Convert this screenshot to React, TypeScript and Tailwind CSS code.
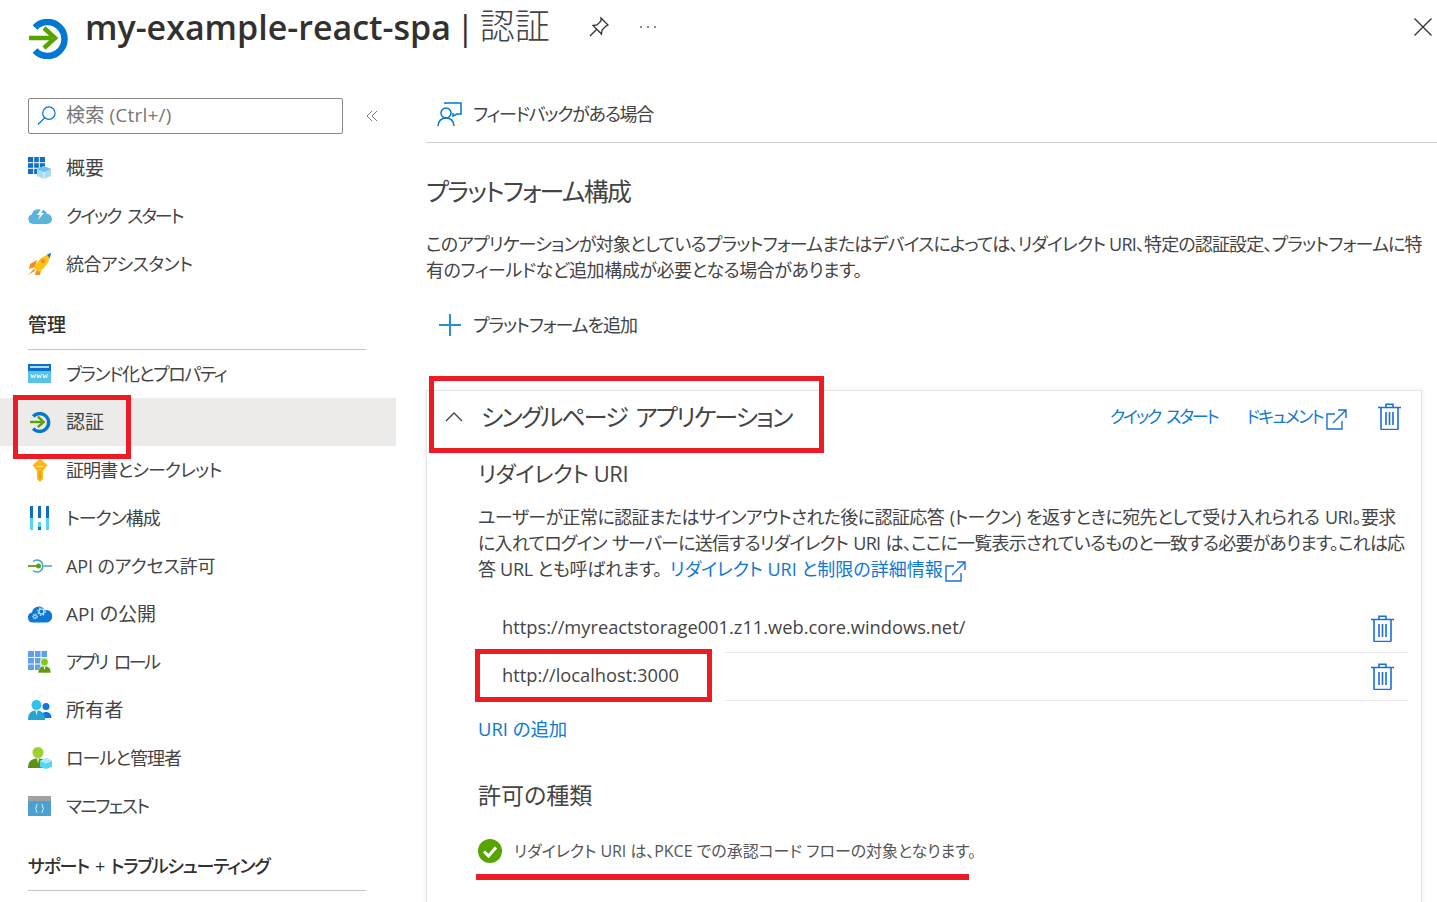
import type { ReactNode } from "react";

const AuthIcon = ({ className }: { className: string }) => (
  <svg viewBox="0 0 40 40" className={className}>
    <path d="M6 8.500A17 17 0 1 1 6 31.500" fill="none" stroke="#0078d4" strokeWidth="6.500" />
    <path d="M0 19h22" stroke="#57a300" strokeWidth="4.500" />
    <path d="M15 9l11 10-11 10" fill="none" stroke="#57a300" strokeWidth="4.500" />
  </svg>
);

const Trash = ({ className }: { className: string }) => (
  <svg viewBox="0 0 23 27" className={className} fill="none" stroke="#1a6fd9" strokeWidth="1.600">
    <path d="M0 4.500h23M3 4.500v21a1 1 0 0 0 1 1h15a1 1 0 0 0 1-1v-21M8 4.500V1.200h7v3.300" />
    <path d="M8 9v13M11.500 9v13M15 9v13" />
  </svg>
);

const ExternalLink = ({ className }: { className: string }) => (
  <svg viewBox="0 0 21 21" className={className} fill="none" stroke="#1a6fd9" strokeWidth="1.400">
    <path d="M9 5H1v15h15v-8M7 14L20 1M12 1h8v8" />
  </svg>
);

const OverviewIcon = () => (
  <svg viewBox="0 0 24 22" className="h-[22px] w-6">
    <path d="M0 0h17v17H0z" fill="#0f6fc6" />
    <path d="M5.700 0v17M11.300 0v17M0 5.700h17M0 11.300h17" stroke="#fff" strokeWidth="1" />
    <path d="M16 9l7 3v7l-7 3-7-3v-7z" fill="#a9dcf3" />
    <path d="M16 9l7 3-7 3-7-3z" fill="#6cc3e8" />
    <path d="M16 15v7" stroke="#fff" strokeWidth="0.800" />
  </svg>
);

const CloudBoltIcon = () => (
  <svg viewBox="0 0 24 16" className="h-4 w-6">
    <path d="M5 16a5 5 0 0 1-1-9.800A6 6 0 0 1 13 2a5 5 0 0 1 6 4 5 5 0 0 1 0 10z" fill="#59b4d9" />
    <path d="M14 0l-5 7h3l-2 5 6-7h-3l3-5z" fill="#fff" />
  </svg>
);

const RocketIcon = () => (
  <svg viewBox="0 0 24 22" className="h-[22px] w-6">
    <path d="M2 11l7-4-2 7-6 2z" fill="#f78d1e" />
    <path d="M13 17l-1 5-5 0 1-4 4-3z" fill="#f78d1e" />
    <path d="M6 15C9 7 15 3 23 0c-1 8-5 14-12 19z" fill="#fcc419" />
    <path d="M19 1.500L23 0c-.3 2-.7 3-1.300 5z" fill="#0078d4" />
    <circle cx="15" cy="8" r="2.200" fill="#f78d1e" />
    <path d="M0 22l6-6 1.500 1.500z" fill="#f78d1e" />
  </svg>
);

const WwwIcon = () => (
  <svg viewBox="0 0 24 20" className="h-5 w-6">
    <path d="M0 0h23v19H0z" fill="#59c2ea" />
    <path d="M0 0h23v7H0z" fill="#0f6fc6" />
    <path d="M2 2h19v2H2z" fill="#a9dcf3" />
    <path d="M3 10l1 4 1.300-3 1.200 3 1-4M9 10l1 4 1.300-3 1.200 3 1-4M15 10l1 4 1.300-3 1.200 3 1-4" fill="none" stroke="#fff" strokeWidth="0.900" />
  </svg>
);

const KeyIcon = () => (
  <svg viewBox="0 0 16 23" className="h-[23px] w-4">
    <path d="M8 0l7.500 6-4.500 6v8l-3 3-3-3v-8L.500 6z" fill="#fcb714" />
    <path d="M4.500 7.500h7" stroke="#ffe27a" strokeWidth="1" />
    <path d="M8 12v9" stroke="#e8960c" strokeWidth="1.200" />
  </svg>
);

const TokenIcon = () => (
  <svg viewBox="0 0 20 24" className="h-6 w-5">
    <path d="M0 0h3v12H0zM8 0h3v12H8zM16 0h3v12h-3z" fill="#0f6fc6" />
    <path d="M0 12h3v12H0zM16 12h3v12h-3z" fill="#50d8f5" />
    <path d="M8 16h3v5H8z" fill="#50d8f5" />
    <path d="M8 21h3v3H8z" fill="#0f6fc6" />
  </svg>
);

const ApiPermIcon = () => (
  <svg viewBox="0 0 24 14" className="h-3.5 w-6">
    <path d="M5 2.500A6 6 0 1 1 5 11.500" fill="none" stroke="#3ba3d0" strokeWidth="1.500" />
    <path d="M16 7h8" stroke="#3ba3d0" strokeWidth="1.500" />
    <path d="M0 7h10" stroke="#57a300" strokeWidth="1.800" />
    <circle cx="10.500" cy="7" r="2.500" fill="#57a300" />
  </svg>
);

const CloudGearIcon = () => (
  <svg viewBox="0 0 24 18" className="h-[18px] w-6">
    <path d="M5 17.500a5 5 0 0 1-1-9.900A7 7 0 0 1 17 5a6.300 6.300 0 0 1 2 12.500z" fill="#0f78d4" />
    <circle cx="13.500" cy="6.500" r="2.500" fill="none" stroke="#d5ecf9" strokeWidth="1.200" />
    <circle cx="13.500" cy="6.500" r="3.800" fill="none" stroke="#d5ecf9" strokeWidth="1.200" strokeDasharray="1.500 1.500" />
    <circle cx="7" cy="11.500" r="1.500" fill="none" stroke="#d5ecf9" strokeWidth="1" />
    <circle cx="7" cy="11.500" r="2.500" fill="none" stroke="#d5ecf9" strokeWidth="1" strokeDasharray="1.200 1.200" />
  </svg>
);

const AppRoleIcon = () => (
  <svg viewBox="0 0 24 22" className="h-[22px] w-6">
    <path d="M0 0h19v19H0z" fill="#5ea0ef" />
    <path d="M6.500 0v19M13 0v19M0 6.500h19M0 13h19" stroke="#fff" strokeWidth="1" />
    <circle cx="16.500" cy="11" r="4" fill="#86c71a" stroke="#fff" strokeWidth="0.800" />
    <path d="M10 22c0-5 2.500-7 6.500-7s6.500 2 6.500 7z" fill="#5e9d10" stroke="#fff" strokeWidth="0.600" />
    <path d="M15.500 15.500h2l-1 3.500z" fill="#fff" />
  </svg>
);

const OwnersIcon = () => (
  <svg viewBox="0 0 24 20" className="h-5 w-6">
    <circle cx="18" cy="6.500" r="3.500" fill="#0f78d4" />
    <path d="M13 18c0-4 2-6 5-6s5.500 2 5.500 6z" fill="#0f78d4" />
    <circle cx="8.500" cy="5" r="5" fill="#2fc3ed" />
    <path d="M0 20c0-7 3-9.500 8.500-9.500s8.500 2.500 8.500 9.500z" fill="#23a6d0" />
    <path d="M7.500 10.500h2l-1 5z" fill="#fff" />
  </svg>
);

const RoleAdminIcon = () => (
  <svg viewBox="0 0 24 22" className="h-[22px] w-6">
    <circle cx="10" cy="5.500" r="5.500" fill="#9bd32a" />
    <path d="M0 21c0-7 4-9.500 10-9.500S20 14 20 21z" fill="#5e8f12" />
    <path d="M9 11.500h2l-1 5z" fill="#fff" />
    <path d="M18 11l6 3v6l-6 2-6-2v-6z" fill="#50d8f5" />
    <path d="M18 11l6 3-6 2.500-6-2.500z" fill="#a9ecfb" />
  </svg>
);

const ManifestIcon = () => (
  <svg viewBox="0 0 24 20" className="h-5 w-6">
    <path d="M0 0h23v5H0z" fill="#a0a1a2" />
    <path d="M0 5h23v15H0z" fill="#4b9fd1" />
    <path d="M9.500 8.500q-1.500 0-1.200 2 .2 1.500-1 2 1.200.5 1 2-.3 2 1.200 2M13.500 8.500q1.500 0 1.200 2-.2 1.500 1 2-1.200.5-1 2 .3 2-1.200 2" fill="none" stroke="#fff" strokeWidth="0.900" />
  </svg>
);

const Item = ({ icon, label, text, active }: { icon: ReactNode; label: string; text: string; active?: boolean }) => (
  <div className={`flex h-12 items-center pl-7 text-[#444] ${active ? "bg-[#edebe9]" : ""}`}>
    <span className="flex w-6 shrink-0 items-center justify-center">{icon}</span>
    <span className={`ml-3.5 ${text}`}>{label}</span>
  </div>
);

const SectionHead = ({ label, text }: { label: string; text: string }) => (
  <div className={`mx-7 w-[338px] border-b border-[#c8c6c4] pb-[10px] leading-[28px] font-medium text-[#323130] ${text}`}>
    {label}
  </div>
);

const UriRow = ({ uri }: { uri: string }) => (
  <>
    <div className="flex h-[47px] items-center justify-between pb-[3px] pl-6 pr-[14px] text-[18.300px] text-[#444]">
      <span>{uri}</span>
      <Trash className="mt-[2px] h-[27px] w-[23px]" />
    </div>
    <div className="ml-[246px] h-px bg-[#edebe9]" />
  </>
);

export default function App() {
  return (
    <div className="relative h-[902px] w-[1437px] overflow-hidden bg-white font-['Open_Sans','Noto_Sans_CJK_JP',sans-serif] [font-feature-settings:'palt'] text-[#323130]">
      {/* Header */}
      <header className="flex h-[98px] items-start pl-[29px]">
        <AuthIcon className="mt-[19px] h-10 w-10 shrink-0" />
        <h1 className="ml-[16px] mt-[4px] text-[34px] leading-[46px] font-semibold whitespace-nowrap">my-example-react-spa</h1>
        <span className="ml-[5px] mt-[4px] text-[34px] leading-[46px] text-[#323130]">|</span>
        <span className="ml-[5px] mt-[3px] text-[35px] leading-[46px] font-light text-[#444]">認証</span>
        <svg viewBox="0 0 22 22" className="ml-[38px] mt-[16px] h-[22px] w-[22px]" fill="none" stroke="#323130" strokeWidth="1.300">
          <path d="M13 2l7 7-2 1-4 4-.5 4L5 9.500l4-.5 4-4zM8.500 13.500L2 20" />
        </svg>
        <svg viewBox="0 0 18 4" className="ml-[29px] mt-[25px] h-1 w-[18px]" fill="#555">
          <circle cx="2" cy="2" r="0.900" />
          <circle cx="9" cy="2" r="0.900" />
          <circle cx="16" cy="2" r="0.900" />
        </svg>
        <svg viewBox="0 0 18 18" className="ml-auto mr-[5px] mt-[18px] h-[18px] w-[18px]" fill="none" stroke="#323130" strokeWidth="1.300">
          <path d="M0.500 0.500l17 17M17.500 0.500l-17 17" />
        </svg>
      </header>

      <div className="flex">
        {/* Sidebar */}
        <aside className="w-[396px] shrink-0">
          <div className="flex items-center pl-7">
            <div className="flex h-9 w-[315px] items-center rounded-[2px] border border-[#8a8886] pb-[2px] pl-2 text-[19px] tracking-[0.200px] text-[#777]">
              <svg viewBox="0 0 20 20" className="h-[19px] w-[19px]" fill="none" stroke="#0078d4" strokeWidth="1.300">
                <circle cx="12.500" cy="7.500" r="6.500" />
                <path d="M8 12.500L1 19.500" />
              </svg>
              <span className="ml-[10px]">検索 (Ctrl+/)</span>
            </div>
            <svg viewBox="0 0 12 12" className="ml-[23px] h-3 w-3" fill="none" stroke="#666" strokeWidth="0.900">
              <path d="M6 1L1 6l5 5M11 1L6 6l5 5" />
            </svg>
          </div>
          <nav className="mt-2.5">
            <Item icon={<OverviewIcon />} label="概要" text="text-[19px]" />
            <Item icon={<CloudBoltIcon />} label="クイック スタート" text="text-[18px] tracking-[-2px] [word-spacing:4px]" />
            <Item icon={<RocketIcon />} label="統合アシスタント" text="text-[18px] tracking-[-0.500px]" />
          </nav>
          <div className="mt-[23px]">
            <SectionHead label="管理" text="text-[19px]" />
          </div>
          <nav>
            <Item icon={<WwwIcon />} label="ブランド化とプロパティ" text="text-[18px] tracking-[-1.400px]" />
            <Item icon={<AuthIcon className="h-[21px] w-[21px]" />} label="認証" text="text-[19px]" active />
            <Item icon={<KeyIcon />} label="証明書とシークレット" text="text-[18px] tracking-[-0.900px]" />
            <Item icon={<TokenIcon />} label="トークン構成" text="text-[18px] tracking-[-1px]" />
            <Item icon={<ApiPermIcon />} label="API のアクセス許可" text="text-[18px] tracking-[-0.100px]" />
            <Item icon={<CloudGearIcon />} label="API の公開" text="text-[19px]" />
            <Item icon={<AppRoleIcon />} label="アプリ ロール" text="text-[18px] tracking-[-2.500px] [word-spacing:5px]" />
            <Item icon={<OwnersIcon />} label="所有者" text="text-[19px] tracking-[0.300px]" />
            <Item icon={<RoleAdminIcon />} label="ロールと管理者" text="text-[18px] tracking-[-1px]" />
            <Item icon={<ManifestIcon />} label="マニフェスト" text="text-[18px] tracking-[-1.700px]" />
          </nav>
          <div className="mt-[22px]">
            <SectionHead label="サポート + トラブルシューティング" text="text-[18px] tracking-[-1.300px] [word-spacing:3px]" />
          </div>
        </aside>

        {/* Main */}
        <main className="ml-[30px] min-w-0 flex-1">
          <div className="flex h-[45px] items-center border-b border-[#d2d0ce] pb-[12px] pl-[11px] text-[18px] tracking-[-1.250px] text-[#444]">
            <svg viewBox="0 0 26 25" className="h-[25px] w-[26px]" fill="none" stroke="#0078d4" strokeWidth="1.500">
              <circle cx="9" cy="11" r="5" />
              <path d="M1 24c0-5 3.500-8 8-8s8 3 8 8M8 2V1h16v11h-4l-4 2v-3" />
            </svg>
            <span className="ml-[10px]">フィードバックがある場合</span>
          </div>

          <h2 className="mt-[30px] text-[25px] leading-[36px] tracking-[-1.700px] text-[#444]">プラットフォーム構成</h2>
          <p className="mt-[22px] text-[18px] leading-[26px] text-[#444]">
            <span className="block tracking-[-0.850px] whitespace-nowrap">このアプリケーションが対象としているプラットフォームまたはデバイスによっては、リダイレクト URI、特定の認証設定、プラットフォームに特</span>
            <span className="block tracking-[-0.450px] whitespace-nowrap">有のフィールドなど追加構成が必要となる場合があります。</span>
          </p>

          <div className="mt-[30px] flex h-6 items-center pl-[12px] text-[18px] tracking-[-1.100px] text-[#444]">
            <svg viewBox="0 0 24 24" className="h-6 w-6" fill="none" stroke="#2a8dd8" strokeWidth="2">
              <path d="M12 1v22M1 12h22" />
            </svg>
            <span className="ml-[11px]">プラットフォームを追加</span>
          </div>

          {/* Platform card */}
          <section className="mt-[53px] h-[600px] w-[996px] border border-[#e5e5e5] shadow-[0_0_6px_rgba(0,0,0,0.08)]">
            <div className="flex h-[52px] items-center pl-[18px] pr-[20px]">
              <svg viewBox="0 0 18 10" className="h-2.5 w-[18px]" fill="none" stroke="#444" strokeWidth="1.300">
                <path d="M1 9l8-8 8 8" />
              </svg>
              <span className="ml-[18px] text-[24px] leading-[36px] tracking-[-1.850px] text-[#444] [word-spacing:4px]">シングルページ アプリケーション</span>
              <span className="ml-auto mr-[2px] text-[17px] tracking-[-2.200px] text-[#0f78d4] [word-spacing:4px]">クイック スタート</span>
              <span className="ml-[27px] text-[17px] tracking-[-1.700px] text-[#0f78d4]">ドキュメント</span>
              <ExternalLink className="ml-[3px] mt-[4px] h-[21px] w-[21px]" />
              <Trash className="mb-[2px] ml-[31px] h-[27px] w-[23px]" />
            </div>

            <div className="pl-[51px] pr-[13px]">
              <h3 className="mt-[14px] text-[22px] leading-[32px] tracking-[-0.500px] text-[#444]">リダイレクト URI</h3>
              <p className="mt-[15px] text-[18px] leading-[26px] text-[#444]">
                <span className="block tracking-[-0.600px] whitespace-nowrap [word-spacing:1.500px]">ユーザーが正常に認証またはサインアウトされた後に認証応答 (トークン) を返すときに宛先として受け入れられる URI。要求</span>
                <span className="block tracking-[-0.800px] whitespace-nowrap [word-spacing:1.500px]">に入れてログイン サーバーに送信するリダイレクト URI は、ここに一覧表示されているものと一致する必要があります。これは応</span>
                <span className="block whitespace-nowrap">
                  <span className="tracking-[-0.300px]">答 URL とも呼ばれます。</span>
                  <span className="ml-[8px] text-[#0f78d4]">リダイレクト URI と制限の詳細情報</span>
                  <ExternalLink className="ml-[2px] inline h-[21px] w-[21px]" />
                </span>
              </p>

              <div className="mt-[23px]">
                <UriRow uri="https://myreactstorage001.z11.web.core.windows.net/" />
                <UriRow uri="http://localhost:3000" />
              </div>

              <div className="mt-[15px] text-[18.400px] leading-[26px] text-[#0f78d4]">URI の追加</div>
              <h3 className="mt-[36px] text-[23px] leading-[34px] text-[#444]">許可の種類</h3>
              <div className="mt-[27px] flex items-center text-[16px] leading-6 text-[#555]">
                <svg viewBox="0 0 24 24" className="h-6 w-6 shrink-0">
                  <circle cx="12" cy="12" r="12" fill="#57a300" />
                  <path d="M6 12.500l4.500 4.500L18 8.500" fill="none" stroke="#fff" strokeWidth="3" />
                </svg>
                <span className="ml-3 tracking-[-0.050px]">リダイレクト URI は、PKCE での承認コード フローの対象となります。</span>
              </div>
            </div>
          </section>
        </main>
      </div>

      {/* Red annotations */}
      <div className="absolute left-[13px] top-[395px] h-[64px] w-[118px] border-[5px] border-[#ed1c24]" />
      <div className="absolute left-[429px] top-[376px] h-[77px] w-[395px] border-[5px] border-[#ed1c24]" />
      <div className="absolute left-[475px] top-[649px] h-[53px] w-[237px] border-[5px] border-[#ed1c24]" />
      <div className="absolute left-[476px] top-[874px] h-[6px] w-[493px] bg-[#ed1c24]" />
    </div>
  );
}
